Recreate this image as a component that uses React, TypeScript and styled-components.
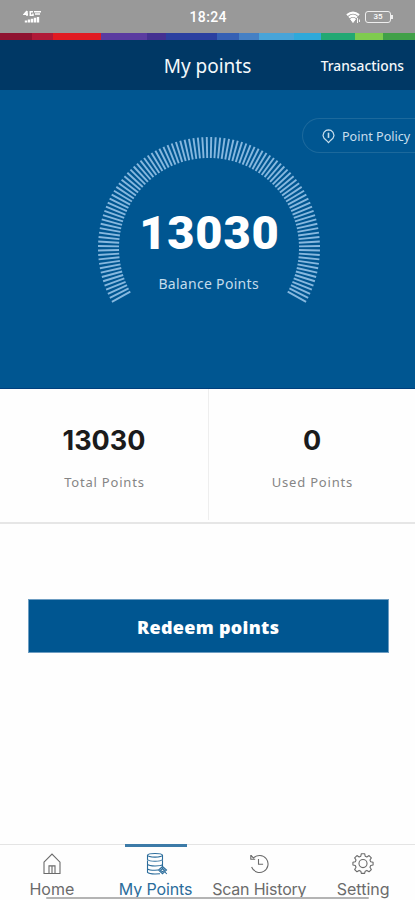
import React from 'react';
import styled, { createGlobalStyle } from 'styled-components';

const GlobalStyle = createGlobalStyle`
  * { box-sizing: border-box; }
  body { margin: 0; background: #fff; }
`;

const Screen = styled.div`
  width: 415px;
  height: 900px;
  display: flex;
  flex-direction: column;
  overflow: hidden;
  background: #fefefe;
  font-family: 'Noto Sans', sans-serif;
`;

const Label = styled.span<{ $size: number; $weight?: number; $track?: number; $font?: string }>`
  font-family: ${(p) => p.$font ?? "'Noto Sans'"}, sans-serif;
  font-size: ${(p) => p.$size}px;
  font-weight: ${(p) => p.$weight ?? 400};
  letter-spacing: ${(p) => p.$track ?? 0}px;
  margin-right: ${(p) => -(p.$track ?? 0)}px;
  line-height: ${(p) => Math.round(p.$size)}px;
  white-space: nowrap;
`;

const StatusBar = styled.header`
  height: 33px;
  flex: none;
  display: grid;
  grid-template-columns: 1fr auto 1fr;
  align-items: center;
  padding: 1px 22px 0 23px;
  background: #999;
  color: #fff;
`;

const StatusIcons = styled.div`
  display: flex;
  justify-content: flex-end;
  align-items: center;
  gap: 4px;
`;

const Stripe = styled.div`
  height: 7px;
  flex: none;
  background: linear-gradient(
    to right,
    #8f1230 0 32px, #b01a38 32px 53px, #e11b22 53px 101px, #5b3ba0 101px 147px,
    #443091 147px 166px, #2b40a0 166px 217px, #3560b4 217px 239px, #4580c4 239px 259px,
    #48a4d8 259px 294px, #2fa9da 294px 321px, #22a873 321px 355px,
    #7fcb4f 355px 383px, #41a048 383px 415px
  );
`;

const TitleBar = styled.div`
  height: 50px;
  flex: none;
  display: grid;
  grid-template-columns: 1fr auto 1fr;
  align-items: center;
  padding: 2px 11px 0;
  background: #003865;
  color: #f4f8fb;
`;

const TitleAction = styled.div`
  display: flex;
  justify-content: flex-end;
`;

const Hero = styled.section`
  height: 299px;
  flex: none;
  display: flex;
  flex-direction: column;
  background: #005691;
  border-bottom: 1px solid #003f7d;
  color: #fff;
`;

const PolicyButton = styled.div`
  align-self: flex-end;
  width: 113px;
  height: 35px;
  margin-top: 28px;
  padding: 2px 0 0 19px;
  display: flex;
  align-items: center;
  gap: 7px;
  border: 1px solid #1c699c;
  border-right: 0;
  border-radius: 18px 0 0 18px;
  color: #c9dfed;
`;

const Gauge = styled.div`
  position: relative;
  width: 224px;
  height: 168px;
  margin: -17px 0 0 96.5px;
  display: flex;
  flex-direction: column;
  align-items: center;
  padding-top: 73px;
  gap: 21px;
`;

const GaugeArc = styled.svg`
  position: absolute;
  inset: 0;
`;

const GaugeValue = styled.div`
  display: flex;
  padding-left: 1px;
`;

const Balance = styled.div`
  color: #c4dcec;
  display: flex;
`;

const Stats = styled.section`
  height: 135px;
  flex: none;
  display: grid;
  grid-template-columns: 209px 1fr;
  border-bottom: 2px solid #e6e6e6;
`;

const Stat = styled.div<{ $divided?: boolean }>`
  display: flex;
  flex-direction: column;
  align-items: center;
  height: 131px;
  padding-top: 38px;
  gap: 22px;
  color: #1b1b1b;
  border-right: ${(p) => (p.$divided ? '1px solid #eee' : '0')};
`;

const StatCaption = styled.div`
  display: flex;
  color: #858585;
`;

const RedeemButton = styled.button`
  flex: none;
  width: 361px;
  height: 54px;
  margin: 75px 0 0 27.5px;
  padding: 1px 0 0;
  display: flex;
  align-items: center;
  justify-content: center;
  border: 1px solid #6d9dc2;
  background: #005691;
  color: #fff;
`;

const TabBar = styled.nav`
  position: relative;
  flex: none;
  height: 56px;
  margin-top: auto;
  display: grid;
  grid-template-columns: repeat(4, 103.75px);
  border-top: 1px solid #e4e4e4;
`;

const Tab = styled.div<{ $active?: boolean }>`
  position: relative;
  display: flex;
  flex-direction: column;
  align-items: center;
  padding-top: 7px;
  gap: 5px;
  color: ${(p) => (p.$active ? '#2b6c9b' : '#6b6b6b')};
`;

const ActiveMark = styled.div`
  position: absolute;
  top: -1px;
  left: 21px;
  width: 62px;
  height: 3px;
  background: #3c7ba8;
`;

const HomeIndicator = styled.div`
  position: absolute;
  left: 46px;
  bottom: 1px;
  width: 323px;
  height: 2px;
  border-radius: 1px;
  background: #b4b4b4;
`;

const TICKS = 104;
const SWEEP = 238;

const ArcTicks = () => (
  <GaugeArc width="224" height="168" viewBox="-112 -112 224 168" stroke="#86b8df" strokeWidth="1.9">
    {Array.from({ length: TICKS }, (_, i) => (
      <line key={i} y1="-90" y2="-111" transform={`rotate(${-SWEEP / 2 + (SWEEP * i) / (TICKS - 1)})`} />
    ))}
  </GaugeArc>
);

const SignalIcon = () => (
  <svg width="20" height="14" viewBox="0 0 20 14" fill="none" stroke="#fff" strokeWidth="1.5">
    <path d="M4 1 1.2 4.2H5M4 1v5M10 1.8H7.3v3.4H10V3.6M11 1.8h7M12 4h5" />
    <path d="M3 10.5v2M6 9.5v3M9 8.8v3.7M12 7.8v4.7M15 7v5.5" strokeWidth="2.4" />
  </svg>
);

const WifiIcon = () => (
  <svg width="15" height="13" viewBox="0 0 15 13" fill="none" stroke="#fff">
    <path d="M1 4.2Q7 -1 13 4.2M3 6.5Q7 3 11 6.5" strokeWidth="2.2" />
    <path d="M4.5 8 7 11.5 9.5 8Q7 6 4.5 8Z" fill="#fff" />
    <path d="M11.5 7v5M13.5 8.5V11" strokeWidth=".9" />
  </svg>
);

const BatteryShell = styled.div`
  position: relative;
  width: 26px;
  height: 12px;
  margin-right: 2px;
  display: flex;
  align-items: center;
  justify-content: center;
  border: 1px solid #eee;
  border-radius: 3px;
  &::after {
    content: '';
    position: absolute;
    right: -3px;
    top: 3px;
    width: 2px;
    height: 4px;
    background: #eee;
  }
`;

const PolicyIcon = () => (
  <svg width="13" height="15" viewBox="0 0 13 15" fill="none" stroke="currentColor" strokeWidth="1.2">
    <path d="M4.2 11.2 2 9.2 1 6.4 2 3.4 4.2 1.4 6.5.9l2.4.5L11 3.4l1 3-1 2.8-2.2 2L6.5 13.6Z" />
    <path d="M6.5 3.7v5.2" strokeWidth="1.6" />
  </svg>
);

const HomeIcon = () => (
  <svg width="22" height="24" viewBox="0 0 22 24" fill="none" stroke="currentColor" strokeWidth="1.1">
    <path d="M3 10.2 11 2l8 8.2v11.3H3ZM8 21.5v-7.6h6v7.6M11 14v7" />
  </svg>
);

const CoinsIcon = () => (
  <svg width="24" height="24" viewBox="0 0 24 24" fill="none" stroke="currentColor" strokeWidth="1.1">
    <path d="M3.5 3.2Q4 1.5 11 1.5t7.5 1.7q-.5 1.9-7.5 1.9T3.5 3.2ZM3.5 3.2v4.3Q5 9.3 11 9.3t7.5-1.8V3.2M3.5 8.4v4Q5 14 11 14t7.5-1.3V8.2M3.5 12.8v4Q5 18.2 11 18.2l3-.2M3.5 17v3.4Q5 22 11 22l5-.3M18.5 12v2" />
    <path d="m18.5 14.5 4 3.6-4 3.6-4-3.6ZM18.5 16.5l2 1.7-2 1.7-2-1.7ZM21 20l1.8 2" />
  </svg>
);

const HistoryIcon = () => (
  <svg width="22" height="24" viewBox="0 0 22 24" fill="none" stroke="currentColor" strokeWidth="1.1">
    <path d="M5.4 6.1A8.5 8.5 0 1 1 3.6 15M2.8 3v4.2h4.4M3 3.5l2.6 2.6M10.5 7v5.2h4.6" />
  </svg>
);

const GearIcon = () => (
  <svg width="22" height="24" viewBox="0 0 24 26" fill="none" stroke="currentColor" strokeWidth="1.2" strokeLinejoin="round">
    <path d="M10.2 1.8h3.6l.6 2.7 1.8.8 2.4-1.5 2.5 2.5-1.5 2.4.8 1.8 2.6.6v3l-2.6.6-.8 1.9 1.5 2.4-2.5 2.5-2.4-1.5-1.8.8-.6 2.4h-3.6l-.6-2.4-1.8-.8-2.4 1.5L2.9 19l1.5-2.4-.8-1.9-2.6-.6v-3l2.6-.6.8-1.8-1.5-2.4 2.5-2.5 2.4 1.5 1.8-.8Z" />
    <circle cx="12" cy="12.5" r="4.4" />
  </svg>
);

export default function App() {
  return (
    <>
      <GlobalStyle />
      <Screen>
        <StatusBar>
          <SignalIcon />
          <Label $size={14} $weight={500} $font="Roboto" $track={0.4}>18:24</Label>
          <StatusIcons>
            <WifiIcon />
            <BatteryShell>
              <Label $size={8} $weight={500} $font="Roboto">35</Label>
            </BatteryShell>
          </StatusIcons>
        </StatusBar>
        <Stripe />
        <TitleBar>
          <span />
          <Label $size={19}>My points</Label>
          <TitleAction>
            <Label $size={13.8} $weight={500}>Transactions</Label>
          </TitleAction>
        </TitleBar>
        <Hero>
          <PolicyButton>
            <PolicyIcon />
            <Label $size={12.6}>Point Policy</Label>
          </PolicyButton>
          <Gauge>
            <ArcTicks />
            <GaugeValue>
              <Label $size={47} $weight={900} $font="Roboto" $track={0.8}>13030</Label>
            </GaugeValue>
            <Balance>
              <Label $size={14} $track={0.3}>Balance Points</Label>
            </Balance>
          </Gauge>
        </Hero>
        <Stats>
          <Stat $divided>
            <Label $size={27} $weight={700} $font="Inter">13030</Label>
            <StatCaption>
              <Label $size={13} $track={0.8}>Total Points</Label>
            </StatCaption>
          </Stat>
          <Stat>
            <Label $size={27} $weight={700} $font="Inter">0</Label>
            <StatCaption>
              <Label $size={13} $track={0.8}>Used Points</Label>
            </StatCaption>
          </Stat>
        </Stats>
        <RedeemButton>
          <Label $size={18} $weight={900} $track={0.3}>Redeem points</Label>
        </RedeemButton>
        <TabBar>
          <Tab>
            <HomeIcon />
            <Label $size={16} $font="Inter">Home</Label>
          </Tab>
          <Tab $active>
            <ActiveMark />
            <CoinsIcon />
            <Label $size={16} $track={-0.1} $font="Inter">My Points</Label>
          </Tab>
          <Tab>
            <HistoryIcon />
            <Label $size={16} $track={-0.2} $font="Inter">Scan History</Label>
          </Tab>
          <Tab>
            <GearIcon />
            <Label $size={16} $font="Inter">Setting</Label>
          </Tab>
          <HomeIndicator />
        </TabBar>
      </Screen>
    </>
  );
}
